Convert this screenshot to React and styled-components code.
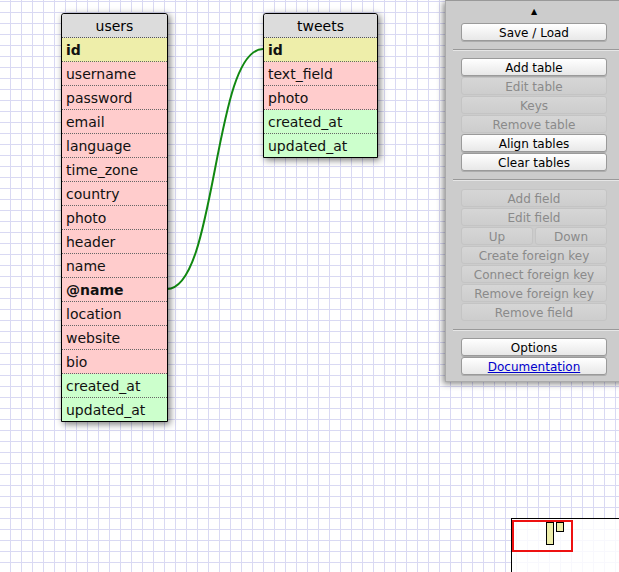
import React from 'react'
import styled, { createGlobalStyle } from 'styled-components'

const GlobalStyle = createGlobalStyle`
    html, body {
        margin: 0;
        padding: 0;
        width: 619px;
        height: 572px;
        overflow: hidden;
    }
`

const Canvas = styled.div`
    position: relative;
    width: 619px;
    height: 572px;
    overflow: hidden;
    background-color: #fff;
    background-image:
        linear-gradient(to right, #d9d9f3 1px, transparent 1px),
        linear-gradient(to bottom, #d9d9f3 1px, transparent 1px);
    background-size: 11px 11px;
    background-position: 10px 1px;
    font-family: "DejaVu Sans", Verdana, sans-serif;
`

const Table = styled.div`
    position: absolute;
    left: ${(p) => p.x}px;
    top: ${(p) => p.y}px;
    width: ${(p) => p.w}px;
    border: 1px solid #000;
    border-radius: 3px 3px 0 0;
    box-shadow: 2px 2px 7px rgba(0, 0, 0, 0.55);
    background: #fff;
`

const Title = styled.div`
    height: 23px;
    line-height: 25px;
    text-align: center;
    background: #dcdcdc;
    border-bottom: 1px dotted #555;
    border-radius: 3px 3px 0 0;
    font-size: 14px;
    color: #000;
`

const rowColors = {
    key: '#eeeeaa',
    field: '#ffcccc',
    date: '#ccffcc'
}

const Row = styled.div`
    height: 23px;
    line-height: 25px;
    padding-left: 4px;
    background: ${(p) => rowColors[p.kind]};
    border-bottom: 1px dotted #666;
    font-size: 14px;
    font-weight: ${(p) => (p.bold ? 'bold' : 'normal')};
    color: #111;

    &:last-child {
        border-bottom: none;
    }
`

const Links = styled.svg`
    position: absolute;
    left: 0;
    top: 0;
    width: 619px;
    height: 572px;
    pointer-events: none;
`

const Panel = styled.div`
    position: absolute;
    top: 0;
    left: 445px;
    width: 190px;
    height: 382px;
    background: #cccccc;
    border-top: 1px solid #999;
    border-left: 1px solid #aaa;
    border-bottom: 1px solid #aaa;
    box-shadow: -2px 2px 6px rgba(0, 0, 0, 0.45);
    padding: 0 0 0 15px;
    box-sizing: border-box;
`

const Toggle = styled.div`
    height: 21px;
    width: 146px;
    display: flex;
    align-items: center;
    justify-content: center;
    font-size: 8px;
    color: #000;
`

const Group = styled.div`
    display: flex;
    flex-direction: column;
    gap: 1px;
    width: 146px;
    padding: ${(p) => p.pad || '0'};
`

const Divider = styled.div`
    height: 0;
    border-top: 1px solid #999;
    border-bottom: 1px solid #e6e6e6;
    margin-left: -8px;
`

const Pair = styled.div`
    display: flex;
    gap: 2px;

    & > * {
        flex: 1;
    }
`

const Button = styled.div`
    box-sizing: border-box;
    height: 18px;
    padding-top: 1px;
    line-height: 16px;
    text-align: center;
    font-size: 12px;
    font-family: "DejaVu Sans", "Lucida Grande", sans-serif;
    border-radius: 3px;
    border: 1px solid ${(p) => (p.disabled ? '#c4c4c4' : '#9a9a9a')};
    color: ${(p) => (p.disabled ? '#8a8a8a' : '#000')};
    background: ${(p) =>
        p.disabled
            ? 'linear-gradient(#d6d6d6, #cdcdcd)'
            : 'linear-gradient(#ffffff, #f1f1f1 60%, #e8e8e8)'};
    box-shadow: ${(p) => (p.disabled ? 'none' : '0 1px 0 rgba(0,0,0,0.15)')};
    overflow: hidden;
    white-space: nowrap;
`

const DocLink = styled.span`
    color: #0000cc;
    text-decoration: underline;
`

const MiniMap = styled.div`
    position: absolute;
    left: 511px;
    top: 518px;
    width: 120px;
    height: 70px;
    border: 1px solid #000;
    background: rgba(255, 255, 255, 0.82);
`

const Viewport = styled.div`
    position: absolute;
    left: 0;
    top: 1px;
    width: 57px;
    height: 28px;
    border: 2px solid #ee1111;
`

const MiniTable = styled.div`
    position: absolute;
    left: ${(p) => p.x}px;
    top: ${(p) => p.y}px;
    width: ${(p) => p.w}px;
    height: ${(p) => p.h}px;
    border: 1px solid #000;
    background: #eeeeaa;
    box-sizing: border-box;
`

const users = [
    ['id', 'key', true],
    ['username', 'field'],
    ['password', 'field'],
    ['email', 'field'],
    ['language', 'field'],
    ['time_zone', 'field'],
    ['country', 'field'],
    ['photo', 'field'],
    ['header', 'field'],
    ['name', 'field'],
    ['@name', 'field', true],
    ['location', 'field'],
    ['website', 'field'],
    ['bio', 'field'],
    ['created_at', 'date'],
    ['updated_at', 'date']
]

const tweets = [
    ['id', 'key', true],
    ['text_field', 'field'],
    ['photo', 'field'],
    ['created_at', 'date'],
    ['updated_at', 'date']
]

const renderRows = (rows) =>
    rows.map(([name, kind, bold]) => (
        <Row key={name} kind={kind} bold={bold}>
            {name}
        </Row>
    ))

export default function App() {
    return (
        <Canvas>
            <GlobalStyle />
            <Links viewBox="0 0 619 572">
                <path
                    d="M167,289 C217,289 213,49 263,49"
                    fill="none"
                    stroke="#118811"
                    strokeWidth="2"
                />
            </Links>

            <Table x={61} y={13} w={105}>
                <Title>users</Title>
                {renderRows(users)}
            </Table>

            <Table x={263} y={13} w={113}>
                <Title>tweets</Title>
                {renderRows(tweets)}
            </Table>

            <Panel>
                <Toggle>▲</Toggle>
                <Group pad="1px 0 8px">
                    <Button>Save / Load</Button>
                </Group>
                <Divider />
                <Group pad="7px 0 8px">
                    <Button>Add table</Button>
                    <Button disabled>Edit table</Button>
                    <Button disabled>Keys</Button>
                    <Button disabled>Remove table</Button>
                    <Button>Align tables</Button>
                    <Button>Clear tables</Button>
                </Group>
                <Divider />
                <Group pad="8px 0 8px">
                    <Button disabled>Add field</Button>
                    <Button disabled>Edit field</Button>
                    <Pair>
                        <Button disabled>Up</Button>
                        <Button disabled>Down</Button>
                    </Pair>
                    <Button disabled>Create foreign key</Button>
                    <Button disabled>Connect foreign key</Button>
                    <Button disabled>Remove foreign key</Button>
                    <Button disabled>Remove field</Button>
                </Group>
                <Divider />
                <Group pad="7px 0 0">
                    <Button>Options</Button>
                    <Button>
                        <DocLink>Documentation</DocLink>
                    </Button>
                </Group>
            </Panel>

            <MiniMap>
                <Viewport />
                <MiniTable x={34} y={3} w={8} h={23} />
                <MiniTable x={44} y={3} w={8} h={10} />
            </MiniMap>
        </Canvas>
    )
}
